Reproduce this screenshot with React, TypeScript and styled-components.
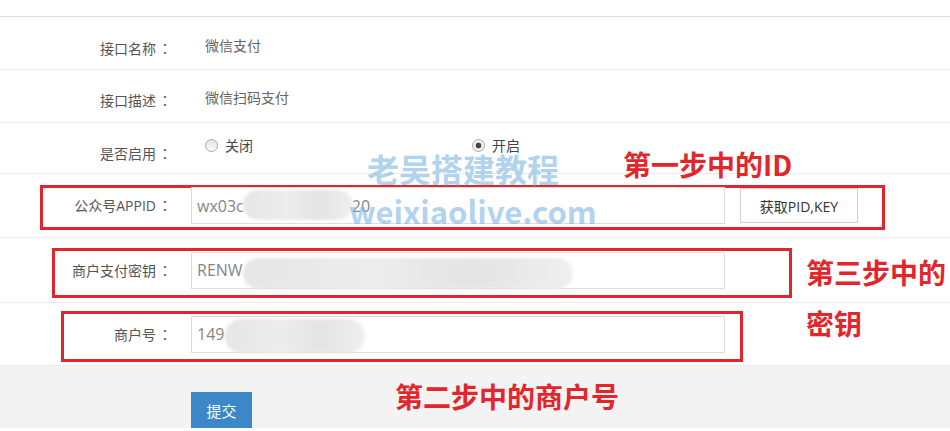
import styled, { createGlobalStyle } from 'styled-components';

const GlobalStyle = createGlobalStyle`
  body {
    margin: 0;
    background: #fff;
    font-family: 'Open Sans', 'Noto Sans CJK SC', sans-serif;
  }
`;

interface IBox {
  left: number;
  top: number;
  width: number;
  height: number;
}

interface IField {
  label: string;
  value: string;
  blob: IBox;
  mark: IBox;
  height: number;
  extra?: boolean;
}

const fields: IField[] = [
  {
    label: '公众号APPID',
    value: 'wx03c' + ' '.repeat(26) + '20',
    blob: { left: 52, top: 3, width: 110, height: 30 },
    mark: { left: 40, top: 11, width: 845, height: 45 },
    height: 63,
    extra: true,
  },
  {
    label: '商户支付密钥',
    value: 'RENW',
    blob: { left: 52, top: 6, width: 330, height: 31 },
    mark: { left: 52, top: 10, width: 740, height: 50 },
    height: 64,
  },
  {
    label: '商户号',
    value: '149',
    blob: { left: 34, top: 3, width: 140, height: 34 },
    mark: { left: 61, top: 8, width: 682, height: 51 },
    height: 62,
  },
];

export default function App() {
  return (
    <S.Page>
      <GlobalStyle />
      <S.TopBar />

      <S.Row $height={52} $padTop={21}>
        <S.Label>
          接口名称<S.Colon>：</S.Colon>
        </S.Label>
        <S.Text>微信支付</S.Text>
      </S.Row>
      <S.Row $height={52} $padTop={20}>
        <S.Label>
          接口描述<S.Colon>：</S.Colon>
        </S.Label>
        <S.Text>微信扫码支付</S.Text>
      </S.Row>
      <S.Row $height={50} $padTop={20}>
        <S.Label>
          是否启用<S.Colon>：</S.Colon>
        </S.Label>
        <S.Radios>
          <S.RadioOption>
            <S.RadioDot />
            关闭
          </S.RadioOption>
          <S.RadioOption>
            <S.RadioDot $checked />
            开启
          </S.RadioOption>
        </S.Radios>
      </S.Row>

      {fields.map((f) => (
        <S.Row key={f.label} $height={f.height} $center>
          <S.Mark style={{ left: f.mark.left, top: f.mark.top, width: f.mark.width, height: f.mark.height }} />
          <S.Label>
            {f.label}
            <S.Colon>：</S.Colon>
          </S.Label>
          <S.InputWrap>
            <S.Input readOnly value={f.value} />
            <S.Blob style={{ left: f.blob.left, top: f.blob.top, width: f.blob.width, height: f.blob.height }} />
          </S.InputWrap>
          {f.extra && <S.FetchButton>获取PID,KEY</S.FetchButton>}
        </S.Row>
      ))}

      <S.Footer>
        <S.Submit>提交</S.Submit>
      </S.Footer>

      <S.Watermark>老吴搭建教程</S.Watermark>
      <S.WatermarkUrl>weixiaolive.com</S.WatermarkUrl>

      <S.Note $top={145} $left={623}>第一步中的ID</S.Note>
      <S.Note $top={253} $left={806}>第三步中的</S.Note>
      <S.Note $top={304} $left={806}>密钥</S.Note>
      <S.Note $top={377} $left={395}>第二步中的商户号</S.Note>
    </S.Page>
  );
}

const S = {
  Page: styled.div`
    position: relative;
    width: 950px;
    height: 431px;
    overflow: hidden;
    background: #fff;
  `,
  TopBar: styled.div`
    height: 16px;
    border-bottom: 1px solid #dedede;
  `,
  Row: styled.div<{ $height: number; $padTop?: number; $center?: boolean }>`
    position: relative;
    box-sizing: border-box;
    height: ${(p) => p.$height + 1}px;
    padding-top: ${(p) => p.$padTop ?? 0}px;
    border-bottom: 1px solid #ededed;
    display: flex;
    align-items: ${(p) => (p.$center ? 'center' : 'flex-start')};
  `,
  Label: styled.div`
    width: 172px;
    flex: none;
    text-align: right;
    font-size: 14px;
    line-height: 20px;
    color: #555;
    white-space: nowrap;
  `,
  Colon: styled.span`
    font-family: 'Noto Sans CJK JP', sans-serif;
    margin-left: 2px;
  `,
  Text: styled.div`
    margin-left: 33px;
    margin-top: -2px;
    font-size: 14px;
    line-height: 20px;
    color: #666;
  `,
  Radios: styled.div`
    margin-left: 33px;
    margin-top: -7px;
    display: flex;
  `,
  RadioOption: styled.label`
    width: 267px;
    display: flex;
    align-items: center;
    gap: 7px;
    font-size: 14px;
    line-height: 20px;
    color: #444;
  `,
  RadioDot: styled.span<{ $checked?: boolean }>`
    width: 11px;
    height: 11px;
    border-radius: 50%;
    border: 1px solid #a8a8a8;
    background: ${(p) =>
      p.$checked
        ? 'radial-gradient(circle, #444 0 2.6px, #f2f2f2 3.2px)'
        : 'linear-gradient(#e4e4e4, #fafafa)'};
    margin-top: -2px;
  `,
  InputWrap: styled.div`
    position: relative;
    margin-left: 19px;
    width: 534px;
    height: 37px;
  `,
  Input: styled.input`
    box-sizing: border-box;
    width: 100%;
    height: 100%;
    border: 1px solid #dcdcdc;
    padding: 0 5px;
    font-family: 'Open Sans', sans-serif;
    font-size: 16px;
    color: #858585;
    background: #fff;
    outline: none;
    white-space: pre;
  `,
  Blob: styled.div`
    position: absolute;
    border-radius: 16px;
    background: linear-gradient(90deg, #e6e6e6, #ececec 40%, #e4e4e4 70%, #efefef);
    filter: blur(1.5px);
  `,
  FetchButton: styled.button`
    margin-left: 15px;
    width: 118px;
    height: 35px;
    border: 1px solid #cfcfcf;
    background: #fff;
    font-family: 'Open Sans', 'Noto Sans CJK SC', sans-serif;
    font-weight: 400;
    font-size: 14px;
    color: #333;
    padding: 0;
  `,
  Mark: styled.div`
    position: absolute;
    box-sizing: border-box;
    border: 3px solid #e0262c;
  `,
  Footer: styled.div`
    height: 62px;
    background: #f3f3f3;
    padding: 26px 0 0 191px;
    box-sizing: border-box;
  `,
  Submit: styled.button`
    width: 61px;
    height: 36px;
    border: none;
    background: #3b87c8;
    color: #fff;
    font-family: 'Noto Sans CJK SC', sans-serif;
    font-size: 15px;
    padding: 0;
  `,
  Watermark: styled.div`
    position: absolute;
    top: 151px;
    left: 367px;
    font-family: 'Noto Sans CJK SC', sans-serif;
    font-weight: 700;
    font-size: 32px;
    line-height: 34px;
    color: rgba(125, 182, 228, 0.62);
    pointer-events: none;
  `,
  WatermarkUrl: styled.div`
    position: absolute;
    top: 191px;
    left: 349px;
    font-family: 'Noto Sans CJK SC', sans-serif;
    font-weight: 700;
    font-size: 31px;
    line-height: 40px;
    color: rgba(125, 182, 228, 0.62);
    pointer-events: none;
  `,
  Note: styled.div<{ $top: number; $left: number }>`
    position: absolute;
    top: ${(p) => p.$top}px;
    left: ${(p) => p.$left}px;
    font-family: 'Noto Sans CJK SC', sans-serif;
    font-weight: 700;
    font-size: 28px;
    line-height: 38px;
    color: #e2262b;
    white-space: nowrap;
  `,
};
